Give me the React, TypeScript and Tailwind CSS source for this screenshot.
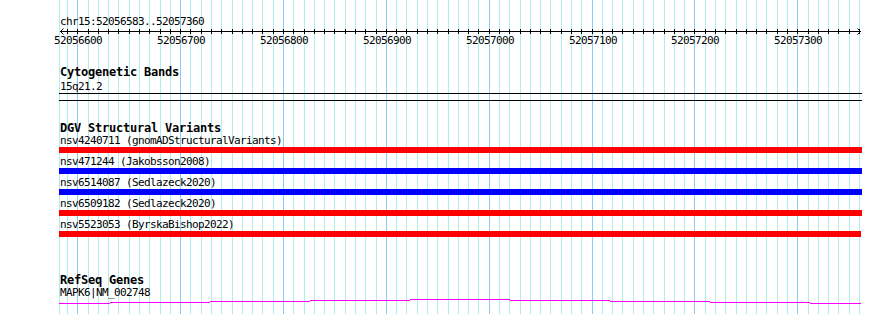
import React from 'react';

const x = (bp: number) => Math.round(77.3 + (bp - 52056600) * 1.02857);

const gridBps: number[] = [];
for (let bp = 52056590; bp <= 52057360; bp += 10) gridBps.push(bp);
const majors = gridBps.filter((bp) => bp % 100 === 0);

const variants = [
  { label: 'nsv4240711 (gnomADStructuralVariants)', color: 'bg-[#ff0000]', w: 'w-[803px]' },
  { label: 'nsv471244 (Jakobsson2008)', color: 'bg-[#0000ff]', w: 'w-[803px]' },
  { label: 'nsv6514087 (Sedlazeck2020)', color: 'bg-[#0000ff]', w: 'w-[803px]' },
  { label: 'nsv6509182 (Sedlazeck2020)', color: 'bg-[#ff0000]', w: 'w-[803px]' },
  { label: 'nsv5523053 (ByrskaBishop2022)', color: 'bg-[#ff0000]', w: 'w-[802px]' },
];

// refseq coverage steps: [from, to, row]
const geneSteps: [number, number, number][] = [
  [59, 110, 4],
  [110, 210, 3],
  [210, 310, 2],
  [310, 410, 1],
  [410, 510, 0],
  [510, 610, 1],
  [610, 710, 2],
  [710, 810, 3],
  [810, 861, 4],
];

const Grid = () => (
  <svg className="absolute inset-0" width={890} height={314} shapeRendering="crispEdges">
    <line x1={59.5} y1={0} x2={59.5} y2={314} stroke="#afeeee" />
    {gridBps.map((bp) => (
      <line
        key={bp}
        x1={x(bp) + 0.5}
        y1={0}
        x2={x(bp) + 0.5}
        y2={314}
        stroke={bp % 100 === 0 ? '#87cefa' : '#afeeee'}
      />
    ))}
  </svg>
);

const Ruler = () => (
  <svg className="block" width={890} height={18} shapeRendering="crispEdges">
    <line x1={60} y1={3.5} x2={861} y2={3.5} stroke="#000" />
    {gridBps.map((bp) => (
      <line key={bp} x1={x(bp) + 0.5} y1={1} x2={x(bp) + 0.5} y2={6} stroke="#000" />
    ))}
    <polyline points="63.5,0.5 60.5,3.5 63.5,6.5" fill="none" stroke="#000" shapeRendering="auto" />
    <polyline points="857.5,0.5 860.5,3.5 857.5,6.5" fill="none" stroke="#000" shapeRendering="auto" />
    {majors.map((bp) => (
      <text
        key={bp}
        x={x(bp) + 1}
        y={16}
        textAnchor="middle"
        fontFamily="DejaVu Sans Mono, monospace"
        fontSize={11}
        letterSpacing={-0.62}
        fill="#000"
      >
        {bp}
      </text>
    ))}
  </svg>
);

export default function App() {
  return (
    <div className="relative w-[890px] h-[314px] overflow-hidden bg-white font-['DejaVu_Sans_Mono',monospace] text-black">
      <Grid />
      <div className="relative pt-[15px]">
        <div className="pl-[60px] h-[13px] leading-[13px] text-[11px] tracking-[-0.62px]">
          chr15:52056583..52057360
        </div>
        <Ruler />

        <div className="mt-[20px] pl-[60px] h-[13px] leading-[13px] text-[12px] font-bold tracking-[-0.22px]">
          Cytogenetic Bands
        </div>
        <div className="mt-[2px] pl-[60px] h-[12px] leading-[12px] text-[11px] tracking-[-0.62px]">
          15q21.2
        </div>
        <div className="ml-[59px] w-[803px] h-[8px] border-y border-black" />

        <div className="mt-[21px] pl-[60px] h-[13px] leading-[13px] text-[12px] font-bold tracking-[-0.22px]">
          DGV Structural Variants
        </div>
        <div className="flex flex-col gap-[3px]">
          {variants.map((v) => (
            <div key={v.label}>
              <div className="pl-[60px] h-[12px] leading-[12px] text-[11px] tracking-[-0.62px] whitespace-pre">
                {v.label}
              </div>
              <div className={`ml-[59px] h-[6px] ${v.w} ${v.color}`} />
            </div>
          ))}
        </div>

        <div className="mt-[37px] pl-[60px] h-[13px] leading-[13px] text-[12px] font-bold tracking-[-0.22px]">
          RefSeq Genes
        </div>
        <div className="pl-[60px] h-[12px] leading-[12px] text-[11px] tracking-[-0.62px]">
          MAPK6|NM_002748
        </div>
        <svg className="block" width={890} height={5} shapeRendering="crispEdges">
          {geneSteps.map(([a, b, r]) => (
            <rect key={a} x={a} y={r} width={b - a} height={1} fill="#ff00ff" />
          ))}
        </svg>
      </div>
    </div>
  );
}
